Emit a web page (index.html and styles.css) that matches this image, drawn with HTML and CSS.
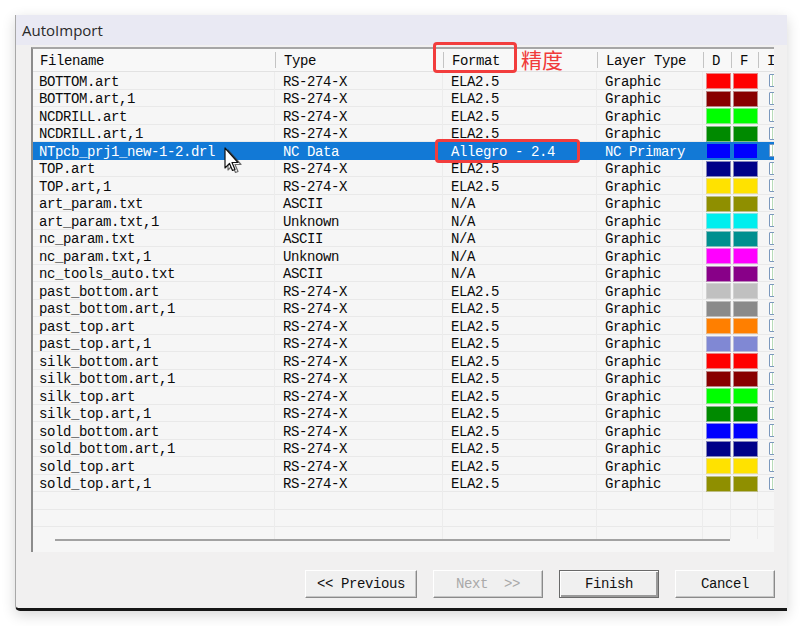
FILE: index.html
```html
<!DOCTYPE html>
<html>
<head>
<meta charset="utf-8">
<link rel="stylesheet" href="styles.css">
</head>
<body>
<div class="window">
  <div class="titlebar">AutoImport</div>
  <div class="list">
    <div class="header">
      <div class="hc first">Filename</div>
      <div class="hc">Type</div>
      <div class="hc">Format</div>
      <div class="hc">Layer Type</div>
      <div class="hc">D</div>
      <div class="hc">F</div>
      <div class="hc">I</div>
    </div>
    <div class="rows">
      <div class="row"><div class="c">BOTTOM.art</div><div class="c">RS-274-X</div><div class="c">ELA2.5</div><div class="c">Graphic</div><div class="c d"><i style="background:#ff0000"></i></div><div class="c f"><i style="background:#ff0000"></i></div><div class="c i"><b></b></div></div>
      <div class="row"><div class="c">BOTTOM.art,1</div><div class="c">RS-274-X</div><div class="c">ELA2.5</div><div class="c">Graphic</div><div class="c d"><i style="background:#880000"></i></div><div class="c f"><i style="background:#880000"></i></div><div class="c i"><b></b></div></div>
      <div class="row"><div class="c">NCDRILL.art</div><div class="c">RS-274-X</div><div class="c">ELA2.5</div><div class="c">Graphic</div><div class="c d"><i style="background:#00ff00"></i></div><div class="c f"><i style="background:#00ff00"></i></div><div class="c i"><b></b></div></div>
      <div class="row"><div class="c">NCDRILL.art,1</div><div class="c">RS-274-X</div><div class="c">ELA2.5</div><div class="c">Graphic</div><div class="c d"><i style="background:#008a00"></i></div><div class="c f"><i style="background:#008a00"></i></div><div class="c i"><b></b></div></div>
      <div class="row sel"><div class="c">NTpcb_prj1_new-1-2.drl</div><div class="c">NC Data</div><div class="c">Allegro - 2.4</div><div class="c">NC Primary</div><div class="c d"><i style="background:#0000ff"></i></div><div class="c f"><i style="background:#0000ff"></i></div><div class="c i"><b></b></div></div>
      <div class="row"><div class="c">TOP.art</div><div class="c">RS-274-X</div><div class="c">ELA2.5</div><div class="c">Graphic</div><div class="c d"><i style="background:#000088"></i></div><div class="c f"><i style="background:#000088"></i></div><div class="c i"><b></b></div></div>
      <div class="row"><div class="c">TOP.art,1</div><div class="c">RS-274-X</div><div class="c">ELA2.5</div><div class="c">Graphic</div><div class="c d"><i style="background:#ffe200"></i></div><div class="c f"><i style="background:#ffe200"></i></div><div class="c i"><b></b></div></div>
      <div class="row"><div class="c">art_param.txt</div><div class="c">ASCII</div><div class="c">N/A</div><div class="c">Graphic</div><div class="c d"><i style="background:#8f8f00"></i></div><div class="c f"><i style="background:#8f8f00"></i></div><div class="c i"><b></b></div></div>
      <div class="row"><div class="c">art_param.txt,1</div><div class="c">Unknown</div><div class="c">N/A</div><div class="c">Graphic</div><div class="c d"><i style="background:#00eeee"></i></div><div class="c f"><i style="background:#00eeee"></i></div><div class="c i"><b></b></div></div>
      <div class="row"><div class="c">nc_param.txt</div><div class="c">ASCII</div><div class="c">N/A</div><div class="c">Graphic</div><div class="c d"><i style="background:#008f8f"></i></div><div class="c f"><i style="background:#008f8f"></i></div><div class="c i"><b></b></div></div>
      <div class="row"><div class="c">nc_param.txt,1</div><div class="c">Unknown</div><div class="c">N/A</div><div class="c">Graphic</div><div class="c d"><i style="background:#ff00ff"></i></div><div class="c f"><i style="background:#ff00ff"></i></div><div class="c i"><b></b></div></div>
      <div class="row"><div class="c">nc_tools_auto.txt</div><div class="c">ASCII</div><div class="c">N/A</div><div class="c">Graphic</div><div class="c d"><i style="background:#880088"></i></div><div class="c f"><i style="background:#880088"></i></div><div class="c i"><b></b></div></div>
      <div class="row"><div class="c">past_bottom.art</div><div class="c">RS-274-X</div><div class="c">ELA2.5</div><div class="c">Graphic</div><div class="c d"><i style="background:#c0c0c0"></i></div><div class="c f"><i style="background:#c0c0c0"></i></div><div class="c i"><b></b></div></div>
      <div class="row"><div class="c">past_bottom.art,1</div><div class="c">RS-274-X</div><div class="c">ELA2.5</div><div class="c">Graphic</div><div class="c d"><i style="background:#8a8a8a"></i></div><div class="c f"><i style="background:#8a8a8a"></i></div><div class="c i"><b></b></div></div>
      <div class="row"><div class="c">past_top.art</div><div class="c">RS-274-X</div><div class="c">ELA2.5</div><div class="c">Graphic</div><div class="c d"><i style="background:#ff7f00"></i></div><div class="c f"><i style="background:#ff7f00"></i></div><div class="c i"><b></b></div></div>
      <div class="row"><div class="c">past_top.art,1</div><div class="c">RS-274-X</div><div class="c">ELA2.5</div><div class="c">Graphic</div><div class="c d"><i style="background:#8088d4"></i></div><div class="c f"><i style="background:#8088d4"></i></div><div class="c i"><b></b></div></div>
      <div class="row"><div class="c">silk_bottom.art</div><div class="c">RS-274-X</div><div class="c">ELA2.5</div><div class="c">Graphic</div><div class="c d"><i style="background:#ff0000"></i></div><div class="c f"><i style="background:#ff0000"></i></div><div class="c i"><b></b></div></div>
      <div class="row"><div class="c">silk_bottom.art,1</div><div class="c">RS-274-X</div><div class="c">ELA2.5</div><div class="c">Graphic</div><div class="c d"><i style="background:#880000"></i></div><div class="c f"><i style="background:#880000"></i></div><div class="c i"><b></b></div></div>
      <div class="row"><div class="c">silk_top.art</div><div class="c">RS-274-X</div><div class="c">ELA2.5</div><div class="c">Graphic</div><div class="c d"><i style="background:#00ff00"></i></div><div class="c f"><i style="background:#00ff00"></i></div><div class="c i"><b></b></div></div>
      <div class="row"><div class="c">silk_top.art,1</div><div class="c">RS-274-X</div><div class="c">ELA2.5</div><div class="c">Graphic</div><div class="c d"><i style="background:#008a00"></i></div><div class="c f"><i style="background:#008a00"></i></div><div class="c i"><b></b></div></div>
      <div class="row"><div class="c">sold_bottom.art</div><div class="c">RS-274-X</div><div class="c">ELA2.5</div><div class="c">Graphic</div><div class="c d"><i style="background:#0000ff"></i></div><div class="c f"><i style="background:#0000ff"></i></div><div class="c i"><b></b></div></div>
      <div class="row"><div class="c">sold_bottom.art,1</div><div class="c">RS-274-X</div><div class="c">ELA2.5</div><div class="c">Graphic</div><div class="c d"><i style="background:#000088"></i></div><div class="c f"><i style="background:#000088"></i></div><div class="c i"><b></b></div></div>
      <div class="row"><div class="c">sold_top.art</div><div class="c">RS-274-X</div><div class="c">ELA2.5</div><div class="c">Graphic</div><div class="c d"><i style="background:#ffe200"></i></div><div class="c f"><i style="background:#ffe200"></i></div><div class="c i"><b></b></div></div>
      <div class="row"><div class="c">sold_top.art,1</div><div class="c">RS-274-X</div><div class="c">ELA2.5</div><div class="c">Graphic</div><div class="c d"><i style="background:#8f8f00"></i></div><div class="c f"><i style="background:#8f8f00"></i></div><div class="c i"><b></b></div></div>
      <div class="row empty"><div class="c"></div><div class="c"></div><div class="c"></div><div class="c"></div><div class="c"></div><div class="c"></div><div class="c"></div></div>
      <div class="row empty"><div class="c"></div><div class="c"></div><div class="c"></div><div class="c"></div><div class="c"></div><div class="c"></div><div class="c"></div></div>
      <div class="row empty"><div class="c"></div><div class="c"></div><div class="c"></div><div class="c"></div><div class="c"></div><div class="c"></div><div class="c"></div></div>
    </div>
    <div class="hscroll"></div>
  </div>
  <div class="buttons">
    <div class="btn prev">&lt;&lt; Previous</div>
    <div class="btn next disabled">Next&nbsp;&nbsp;&gt;&gt;</div>
    <div class="btn finish">Finish</div>
    <div class="btn cancel">Cancel</div>
  </div>

  <div class="mark mark-format"></div>
  <div class="mark mark-allegro"></div>
  <div class="note">精度</div>
  <svg class="cursor" width="26" height="32" viewBox="0 0 26 32">
    <path d="M4 3 L4 23 L8.5 18.5 L11.5 25.5 L14 24.5 L11 17.5 L17 17.5 Z" fill="#fff" stroke="#333" stroke-width="1.2" stroke-linejoin="round" opacity="0.7"/>
    <path d="M1 1 L1 21 L5.5 16.5 L8.5 23.5 L11 22.5 L8 15.5 L14 15.5 Z" fill="#fff" stroke="#111" stroke-width="1.2" stroke-linejoin="round"/>
  </svg>
</div>
</body>
</html>
```

FILE: styles.css
```css
* { box-sizing: border-box; }
html, body { margin: 0; padding: 0; background: #ffffff; }
body { width: 802px; height: 626px; overflow: hidden; }

.window {
  position: relative;
  margin: 15px 0 0 15px;
  width: 772px;
  height: 596px;
  background: #f1f0f0;
  border-left: 1px solid #a8a8a8;
  border-bottom: 3px solid #161616;
  border-bottom-left-radius: 5px;
  box-shadow: 0 4px 14px rgba(0,0,0,0.16);
  display: flex;
  flex-direction: column;
}

.titlebar {
  height: 30px;
  background: #e9e9f3;
  padding-left: 6px;
  font-family: "Open Sans", "Noto Sans", sans-serif;
  font-size: 15px;
  line-height: 31px;
  color: #2a2a2a;
}

.list {
  margin: 2px 0 0 15px;
  width: 743px;
  height: 505px;
  border-left: 2px solid #8c8c8c;
  border-top: 2px solid #a6a6a6;
  background: #f6f6f6;
  display: flex;
  flex-direction: column;
  overflow: hidden;
  font-family: "Liberation Mono", monospace;
  font-size: 14px;
  letter-spacing: -0.4px;
  color: #0a0a0a;
}

.header, .row {
  display: grid;
  grid-template-columns: 242px 168px 154px 106px 28px 27px 60px;
  flex: none;
}

.header {
  height: 23px;
  align-items: center;
  border-bottom: 1px solid #e2e2e2;
  background: #f8f8f8;
}
.hc {
  height: 16px;
  line-height: 16px;
  padding: 1px 0 0 8px;
  border-left: 1px solid #c4c4c4;
  white-space: nowrap;
}
.hc.first { border-left: none; padding-left: 7px; }

.rows {
  flex: 1;
  overflow: hidden;
}

.row {
  height: 17.5px;
  grid-template-rows: 17.5px;
  line-height: 17.5px;
  box-shadow: inset 0 -1px 0 #e9e9e9;
}
.c {
  padding: 1.5px 0 0 8px;
  white-space: nowrap;
  border-right: 1px solid #ececec;
  overflow: hidden;
}
.row .c:first-child { padding-left: 6px; }

.c.d, .c.f { padding: 1px 0 0 3px; border-right: none; }
.c.f { padding-left: 2px; }
.c i {
  display: block;
  width: 25px;
  height: 16px;
  border: 1px solid rgba(220,220,220,0.6);
}
.c.i { padding: 2px 0 0 11px; }
.c.i b {
  display: block;
  width: 12px;
  height: 13px;
  border: 1px solid #7b98bd;
  background: #fcfcfc;
  border-radius: 1px;
  box-shadow: inset 2px 0 0 #ffffff, inset 3px 0 0 #b8dcb8;
}

.row.sel { background: #1279d6; color: #ffffff; box-shadow: none; }
.row.sel .c { border-right-color: transparent; }
.row.sel .c i { border-color: #1279d6; }

.hscroll {
  flex: none;
  height: 2px;
  width: 675px;
  margin: 0 0 11px 22px;
  background: #a2a2a2;
}

.buttons {
  display: flex;
  justify-content: flex-end;
  gap: 16px;
  margin-top: 18px;
  padding-right: 12px;
}
.btn {
  height: 28px;
  background: #f0f0f0;
  border: 1px solid;
  border-color: #ffffff #8a8a8a #8a8a8a #ffffff;
  box-shadow: inset -1px -1px 0 #c6c6c6;
  font-family: "Liberation Mono", monospace;
  font-size: 14px;
  letter-spacing: -0.4px;
  line-height: 26px;
  text-align: center;
  color: #111;
}
.prev { width: 112px; }
.next { width: 110px; }
.finish { width: 100px; border: 1px solid #6a6a6a; box-shadow: inset 1px 1px 0 #ffffff, inset -2px -2px 0 #9a9a9a; }
.cancel { width: 100px; }
.disabled { color: #a9a9a9; }

.mark {
  position: absolute;
  border: 3px solid #f23d3d;
  border-radius: 4px;
}
.mark-format { left: 417px; top: 27px; width: 84px; height: 31px; }
.mark-allegro { left: 419px; top: 124px; width: 145px; height: 24px; }
.note {
  position: absolute;
  left: 505px;
  top: 32px;
  font-family: "Noto Sans CJK SC", sans-serif;
  font-size: 21px;
  line-height: 24px;
  color: #f03a3a;
}
.cursor {
  position: absolute;
  left: 208px;
  top: 132px;
}
```
